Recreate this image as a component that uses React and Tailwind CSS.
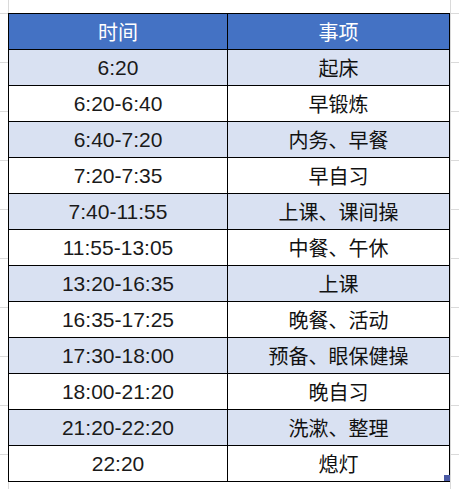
import React from "react";

const rows = [
  ["6:20", "起床"],
  ["6:20-6:40", "早锻炼"],
  ["6:40-7:20", "内务、早餐"],
  ["7:20-7:35", "早自习"],
  ["7:40-11:55", "上课、课间操"],
  ["11:55-13:05", "中餐、午休"],
  ["13:20-16:35", "上课"],
  ["16:35-17:25", "晚餐、活动"],
  ["17:30-18:00", "预备、眼保健操"],
  ["18:00-21:20", "晚自习"],
  ["21:20-22:20", "洗漱、整理"],
  ["22:20", "熄灯"],
];

export default function App() {
  return (
    <div
      className="relative w-[459px] h-[489px] overflow-hidden bg-white pt-[13px] pl-[8px] bg-[linear-gradient(to_right,transparent_8px,#dadada_8px_9px,transparent_9px_450px,#dadada_450px_451px,transparent_451px),repeating-linear-gradient(to_bottom,transparent_0_13px,#dadada_13px_14px,transparent_14px_49px)]"
      style={{ fontFamily: '"Noto Sans CJK SC", "Noto Sans", sans-serif' }}
    >
      <div className="w-[442px] border-l border-t border-black grid grid-cols-[219px_222px] text-[20px] leading-none">
        <div className="h-[36px] border-r border-b border-black bg-[#4472c4] text-white flex items-center justify-center">时间</div>
        <div className="h-[36px] border-r border-b border-black bg-[#4472c4] text-white flex items-center justify-center">事项</div>
        {rows.map(([t, e], i) => (
          <React.Fragment key={i}>
            <div
              className={`h-[36px] border-r border-b border-black flex items-center justify-center text-[#1a1a1a] text-[21px] font-['Liberation_Sans',sans-serif] ${i % 2 === 0 ? "bg-[#d9e1f2]" : "bg-white"}`}
            >
              {t}
            </div>
            <div className={`h-[36px] border-r border-b border-black flex items-center justify-center text-[#111] ${i % 2 === 0 ? "bg-[#d9e1f2]" : "bg-white"}`}>{e}</div>
          </React.Fragment>
        ))}
      </div>
      <div className="absolute left-[444px] top-[475px] w-[6px] h-[6px] bg-[#4b5aa5]" />
    </div>
  );
}
